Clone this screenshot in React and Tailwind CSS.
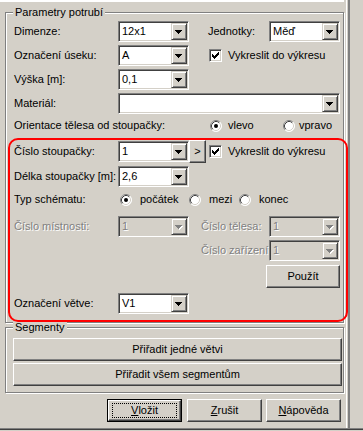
import React from 'react';

// Windows classic dialog: Parametry potrubí

const sunken =
  'border border-t-[#808080] border-l-[#808080] border-b-white border-r-white shadow-[inset_1px_1px_0_#404040,inset_-1px_-1px_0_#d4d0c8]';
const raised =
  'border border-t-white border-l-white border-b-[#404040] border-r-[#404040] shadow-[inset_-1px_-1px_0_#808080] bg-[#d4d0c8]';
const dis = 'text-[#808080] [text-shadow:1px_1px_0_#fff]';

const Arrow = ({ disabled }) => (
  <svg width="8" height="5" viewBox="0 0 8 5" shapeRendering="crispEdges">
    {disabled && (
      <g fill="#fff">
        <rect x="1" y="1" width="7" height="1" />
        <rect x="2" y="2" width="5" height="1" />
        <rect x="3" y="3" width="3" height="1" />
        <rect x="4" y="4" width="1" height="1" />
      </g>
    )}
    <g fill={disabled ? '#808080' : '#000'}>
      <rect x="0" y="0" width="7" height="1" />
      <rect x="1" y="1" width="5" height="1" />
      <rect x="2" y="2" width="3" height="1" />
      <rect x="3" y="3" width="1" height="1" />
    </g>
  </svg>
);

const Combo = ({ value, w = 'w-[71px]', disabled }) => (
  <div className={`flex h-[21px] shrink-0 p-px ${sunken} ${w} ${disabled ? 'bg-[#d4d0c8]' : 'bg-white'}`}>
    <span className={`flex-1 pl-[2px] leading-[17px] ${disabled ? dis : ''}`}>{value}</span>
    <div className="w-[16px] h-[17px] flex items-center justify-center border border-t-[#d4d0c8] border-l-[#d4d0c8] border-b-[#404040] border-r-[#404040] shadow-[inset_1px_1px_0_#fff,inset_-1px_-1px_0_#808080] bg-[#d4d0c8] pt-px">
      <Arrow disabled={disabled} />
    </div>
  </div>
);

const Check = () => (
  <div className={`w-[13px] h-[13px] shrink-0 bg-white flex items-center justify-center ${sunken}`}>
    <svg width="7" height="7" viewBox="0 0 7 7" shapeRendering="crispEdges" fill="#000">
      <rect x="6" y="0" width="1" height="1" />
      <rect x="5" y="1" width="2" height="1" />
      <rect x="0" y="2" width="1" height="1" />
      <rect x="4" y="2" width="3" height="1" />
      <rect x="0" y="3" width="2" height="1" />
      <rect x="3" y="3" width="3" height="1" />
      <rect x="0" y="4" width="5" height="1" />
      <rect x="1" y="5" width="3" height="1" />
      <rect x="2" y="6" width="1" height="1" />
    </svg>
  </div>
);

const Radio = ({ checked }) => (
  <svg width="12" height="12" viewBox="0 0 12 12" className="shrink-0">
    <circle cx="6" cy="6" r="5.5" fill="#fff" />
    <path d="M2.11 9.89 A5.5 5.5 0 0 1 9.89 2.11" fill="none" stroke="#808080" />
    <path d="M9.89 2.11 A5.5 5.5 0 0 1 2.11 9.89" fill="none" stroke="#fff" />
    <path d="M2.82 9.18 A4.5 4.5 0 0 1 9.18 2.82" fill="none" stroke="#404040" />
    <path d="M9.18 2.82 A4.5 4.5 0 0 1 2.82 9.18" fill="none" stroke="#d4d0c8" />
    {checked && <circle cx="6" cy="6" r="2" fill="#000" />}
  </svg>
);

const Label = ({ children, w = 'w-[104px]', disabled, className = '' }) => (
  <span className={`shrink-0 whitespace-nowrap leading-[13px] ${w} ${disabled ? dis : ''} ${className}`}>{children}</span>
);

const Row = ({ children, className = '' }) => (
  <div className={`flex items-center h-[21px] pl-[8px] ${className}`}>{children}</div>
);

const Button = ({ children, className = '' }) => (
  <div className={`flex items-center justify-center h-[23px] shrink-0 leading-[13px] ${raised} ${className}`}>{children}</div>
);

const GroupTitle = ({ children }) => (
  <span className="self-start -mt-[7px] ml-[7px] px-[2px] bg-[#d4d0c8] leading-[13px]">{children}</span>
);

export default function App() {
  return (
    <div className="relative w-[363px] h-[431px] bg-[#d4d0c8] text-black text-[11px] font-['Liberation_Sans',Arial,sans-serif] flex flex-col overflow-hidden">
      <div className="flex h-[428px]">
        <div className="w-[346px] flex flex-col">
          <div className="h-[3px] w-[344px] bg-white border-b border-[#d4d0c8]" />

          {/* Parametry potrubí */}
          <div className="mt-[9px] ml-[5px] w-[339px] h-[311px] shrink-0 border border-[#808080] shadow-[inset_1px_1px_0_#fff,1px_1px_0_#fff] flex flex-col">
            <GroupTitle>Parametry potrubí</GroupTitle>

            <Row className="mt-[2px]">
              <Label>Dimenze:</Label>
              <Combo value="12x1" />
              <Label w="w-[61px]" className="ml-[19px]">Jednotky:</Label>
              <Combo value="Měď" />
            </Row>

            <Row className="mt-[3px]">
              <Label>Označení úseku:</Label>
              <Combo value="A" />
              <div className="ml-[20px]"><Check /></div>
              <span className="ml-[6px] whitespace-nowrap">Vykreslit do výkresu</span>
            </Row>

            <Row className="mt-[3px]">
              <Label>Výška [m]:</Label>
              <Combo value="0,1" />
            </Row>

            <Row className="mt-[3px]">
              <Label>Materiál:</Label>
              <Combo value="" w="w-[222px]" />
            </Row>

            <Row className="mt-[1px]">
              <Label w="w-[196px]">Orientace tělesa od stoupačky:</Label>
              <div className="flex items-center w-[73px] shrink-0">
                <Radio checked />
                <span className="ml-[6px]">vlevo</span>
              </div>
              <div className="flex items-center">
                <Radio />
                <span className="ml-[4px]">vpravo</span>
              </div>
            </Row>

            <Row className="mt-[5px]">
              <Label>Číslo stoupačky:</Label>
              <Combo value="1" />
              <Button className="w-[17px] h-[21px]">&gt;</Button>
              <div className="ml-[3px]"><Check /></div>
              <span className="ml-[6px] whitespace-nowrap">Vykreslit do výkresu</span>
            </Row>

            <Row className="mt-[4px]">
              <Label>Délka stoupačky [m]:</Label>
              <Combo value="2,6" />
            </Row>

            <Row className="mt-[2px]">
              <Label>Typ schématu:</Label>
              <div className="ml-[2px] flex items-center w-[69px] shrink-0">
                <Radio checked />
                <span className="ml-[8px]">počátek</span>
              </div>
              <div className="flex items-center w-[50px] shrink-0">
                <Radio />
                <span className="ml-[8px]">mezi</span>
              </div>
              <div className="flex items-center">
                <Radio />
                <span className="ml-[8px]">konec</span>
              </div>
            </Row>

            <Row className="mt-[6px]">
              <Label disabled>Číslo místnosti:</Label>
              <Combo value="1" disabled />
              <Label w="w-[68px]" className="ml-[12px]" disabled>Číslo tělesa:</Label>
              <Combo value="1" disabled />
            </Row>

            <Row className="mt-[3px]">
              <Label w="w-[68px]" className="ml-[187px]" disabled>Číslo zařízení:</Label>
              <Combo value="1" disabled />
            </Row>

            <div className="flex pl-[8px] mt-[4px]">
              <Button className="ml-[252px] w-[74px]">Použít</Button>
            </div>

            <Row className="mt-[5px]">
              <Label>Označení větve:</Label>
              <Combo value="V1" />
            </Row>
          </div>

          {/* Segmenty */}
          <div className="mt-[4px] ml-[5px] w-[339px] h-[66px] shrink-0 border border-[#808080] shadow-[inset_1px_1px_0_#fff,1px_1px_0_#fff] flex flex-col">
            <GroupTitle>Segmenty</GroupTitle>
            <Button className="mt-[4px] ml-[7px] w-[329px]">Přiřadit jedné větvi</Button>
            <Button className="mt-[2px] ml-[7px] w-[329px]">Přiřadit všem segmentům</Button>
          </div>

          {/* Dialog buttons */}
          <div className="flex mt-[6px]">
            <div className="ml-[107px] w-[75px] h-[23px] border border-black flex shrink-0">
              <div className={`flex-1 flex items-center justify-center ${raised}`}>
                <span className="w-[65px] h-[15px] border border-dotted border-black flex items-center justify-center leading-[13px]">
                  <span><span className="underline">V</span>ložit</span>
                </span>
              </div>
            </div>
            <Button className="ml-[5px] w-[75px]">
              <span><span className="underline">Z</span>rušit</span>
            </Button>
            <Button className="ml-[4px] w-[75px]">
              <span><span className="underline">N</span>ápověda</span>
            </Button>
          </div>
        </div>
        <div className="w-px bg-white" />
        <div className="w-px" />
        <div className="w-[2px] bg-[#808080]" />
      </div>
      <div className="h-px bg-[#808080]" />
      <div className="h-px bg-[#404040]" />

      {/* red annotation frame */}
      <div className="absolute left-[8px] top-[138px] w-[340px] h-[184px] border-2 border-[#ff0000] rounded-[10px] pointer-events-none" />
    </div>
  );
}
